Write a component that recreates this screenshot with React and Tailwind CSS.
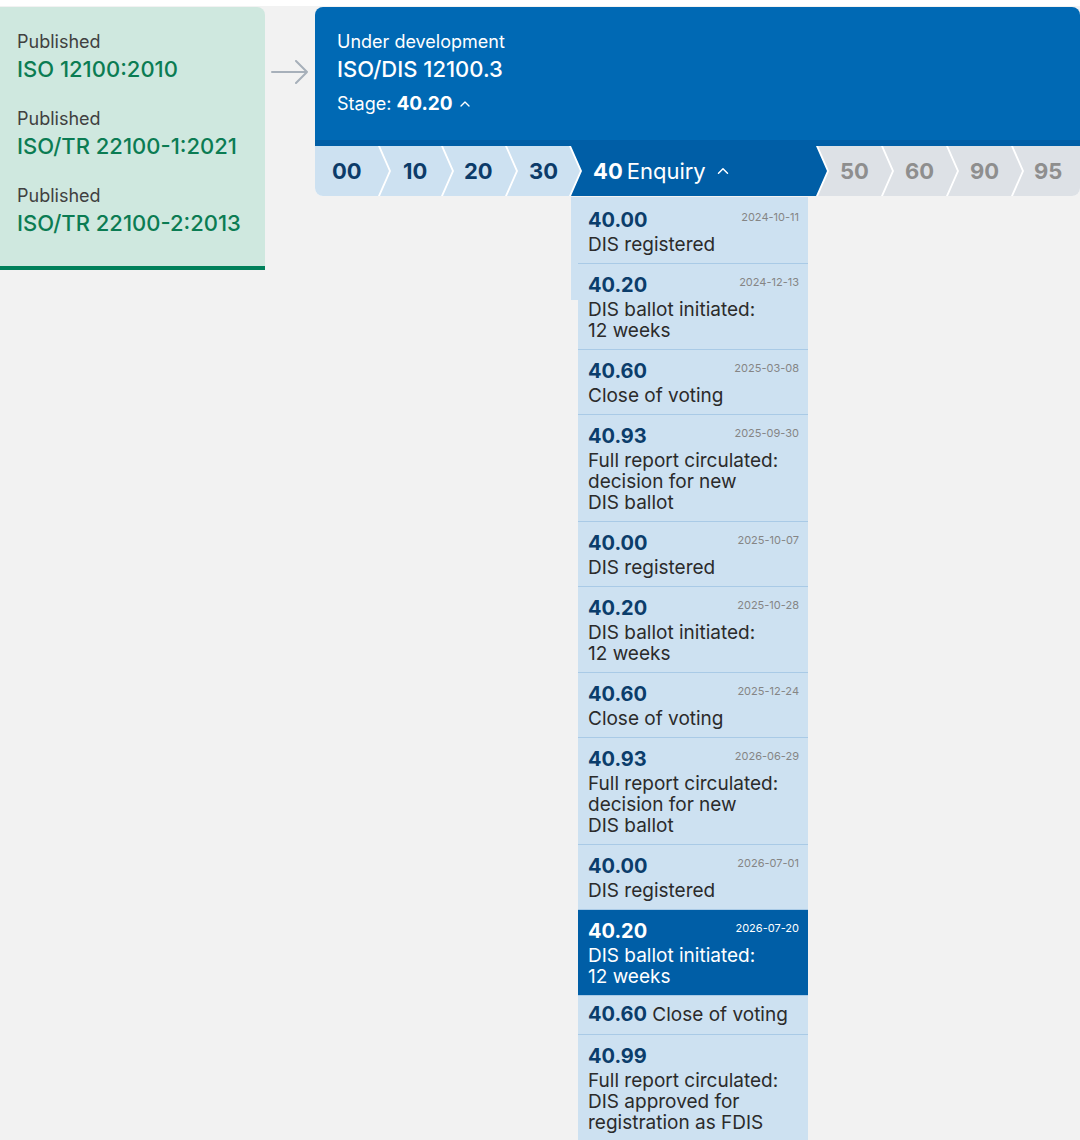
import { ChevronUp } from 'lucide-react';

const published = ['ISO 12100:2010', 'ISO/TR 22100-1:2021', 'ISO/TR 22100-2:2013'];

const stages = [
    { code: '40.00', date: '2024-10-11', lines: ['DIS registered'] },
    { code: '40.20', date: '2024-12-13', lines: ['DIS ballot initiated:', '12 weeks'] },
    { code: '40.60', date: '2025-03-08', lines: ['Close of voting'] },
    { code: '40.93', date: '2025-09-30', lines: ['Full report circulated:', 'decision for new', 'DIS ballot'] },
    { code: '40.00', date: '2025-10-07', lines: ['DIS registered'] },
    { code: '40.20', date: '2025-10-28', lines: ['DIS ballot initiated:', '12 weeks'] },
    { code: '40.60', date: '2025-12-24', lines: ['Close of voting'] },
    { code: '40.93', date: '2026-06-29', lines: ['Full report circulated:', 'decision for new', 'DIS ballot'] },
    { code: '40.00', date: '2026-07-01', lines: ['DIS registered'] },
    { code: '40.20', date: '2026-07-20', lines: ['DIS ballot initiated:', '12 weeks'], current: true },
];

const chevron = '[clip-path:polygon(0_0,calc(100%_-_11px)_0,100%_50%,calc(100%_-_11px)_100%,0_100%,11px_50%)]';
const done = 'bg-[#cde1f1] text-[#0c3b69]';
const todo = 'bg-[#dde1e6] text-[#8e8e8e]';

function Stage({ s, first }) {
    return (
        <div className={`border-b border-[#a9cae6] pl-[10px] pr-[9px] pb-[8px] ${first ? 'pt-[10px]' : 'pt-[8px]'} ${s.current ? 'bg-[#005ea6] text-white' : 'text-[#2b2b2b]'}`}>
            <div className="flex items-start justify-between">
                <span className={`text-[20px] leading-[27px] font-bold ${s.current ? 'text-white' : 'text-[#0b3d6b]'}`}>{s.code}</span>
                <span className={`text-[11px] leading-[20px] ${s.current ? 'text-white' : 'text-[#858585]'}`}>{s.date}</span>
            </div>
            <div className="text-[19px] leading-[21px]">
                {s.lines.map((l, i) => <div key={i}>{l}</div>)}
            </div>
        </div>
    );
}

export default function App() {
    return (
        <div className="h-[1140px] overflow-hidden bg-[#f2f2f2] font-['Inter',sans-serif]">
            <div className="h-[6px] bg-white" />
            <div className="mt-px flex items-start">
                <div className="w-[265px] shrink-0 rounded-tr-lg border-b-4 border-[#00805a] bg-[#cfe8df] pt-[23px] pb-[28px] pl-[17px]">
                    {published.map((p, i) => (
                        <div key={i} className="mb-[23px] last:mb-0">
                            <div className="text-[18px] leading-[24px] text-[#404040]">Published</div>
                            <div className="text-[22px] leading-[30px] font-medium text-[#0b7c53]">{p}</div>
                        </div>
                    ))}
                </div>

                <div className="w-[50px] shrink-0 flex justify-center pt-[53px]">
                    <svg width="40" height="24" viewBox="0 0 40 24" fill="none" stroke="#a7b0ba" strokeWidth="2" strokeLinecap="round" strokeLinejoin="round">
                        <path d="M2 12H37M26 1L37 12L26 23" />
                    </svg>
                </div>

                <div className="flex-1 flex flex-col">
                    <div className="rounded-t-lg bg-[#0069b4] pl-[22px] pt-[23px] pb-[24px] text-white">
                        <div className="text-[18px] leading-[24px]">Under development</div>
                        <div className="text-[22px] leading-[30px] font-medium">ISO/DIS 12100.3</div>
                        <div className="mt-[8px] flex items-center text-[18px] leading-[24px]">
                            Stage:&nbsp;<span className="font-bold text-[19px]">40.20</span>
                            <ChevronUp size={16} strokeWidth={2} className="ml-[4px]" />
                        </div>
                    </div>
                    <div className="h-[6px] bg-[#005ea6]" />

                    <div className="flex h-[50px] overflow-hidden rounded-b-lg bg-white text-[22px] font-bold">
                        <div className={`w-[74px] flex items-center pl-[17px] ${done} [clip-path:polygon(0_0,calc(100%_-_11px)_0,100%_50%,calc(100%_-_11px)_100%,0_100%)]`}>00</div>
                        <div className={`-ml-[9px] w-[72px] flex items-center pl-[23px] ${done} ${chevron}`}>10</div>
                        <div className={`-ml-[9px] w-[73px] flex items-center pl-[21px] ${done} ${chevron}`}>20</div>
                        <div className={`-ml-[9px] w-[73px] flex items-center pl-[22px] ${done} ${chevron}`}>30</div>
                        <div className={`-ml-[9px] w-[256px] flex items-center pl-[22px] bg-[#005ea6] text-white ${chevron}`}>
                            40<span className="ml-[4px] font-normal">Enquiry</span>
                            <ChevronUp size={18} strokeWidth={2} className="ml-[8px]" />
                        </div>
                        <div className={`-ml-[9px] w-[74px] flex items-center pl-[22px] ${todo} ${chevron}`}>50</div>
                        <div className={`-ml-[9px] w-[74px] flex items-center pl-[22px] ${todo} ${chevron}`}>60</div>
                        <div className={`-ml-[9px] w-[74px] flex items-center pl-[22px] ${todo} ${chevron}`}>90</div>
                        <div className={`-ml-[9px] flex-1 flex items-center pl-[21px] ${todo} [clip-path:polygon(0_0,100%_0,100%_100%,0_100%,11px_50%)]`}>95</div>
                    </div>

                    <div className="mt-px ml-[256px] flex items-start">
                        <div className="h-[103px] w-[7px] bg-[#cde1f1]" />
                        <div className="w-[230px] bg-[#cde1f1]">
                            {stages.map((s, i) => <Stage key={i} s={s} first={i === 0} />)}
                            <div className="border-b border-[#a9cae6] pl-[10px] pt-[5px] pb-[5px] leading-[27px] text-[#2b2b2b]">
                                <span className="text-[20px] font-bold text-[#0b3d6b]">40.60</span>
                                <span className="text-[19px]"> Close of voting</span>
                            </div>
                            <Stage s={{ code: '40.99', date: '', lines: ['Full report circulated:', 'DIS approved for', 'registration as FDIS'] }} />
                        </div>
                    </div>
                </div>
            </div>
        </div>
    );
}
